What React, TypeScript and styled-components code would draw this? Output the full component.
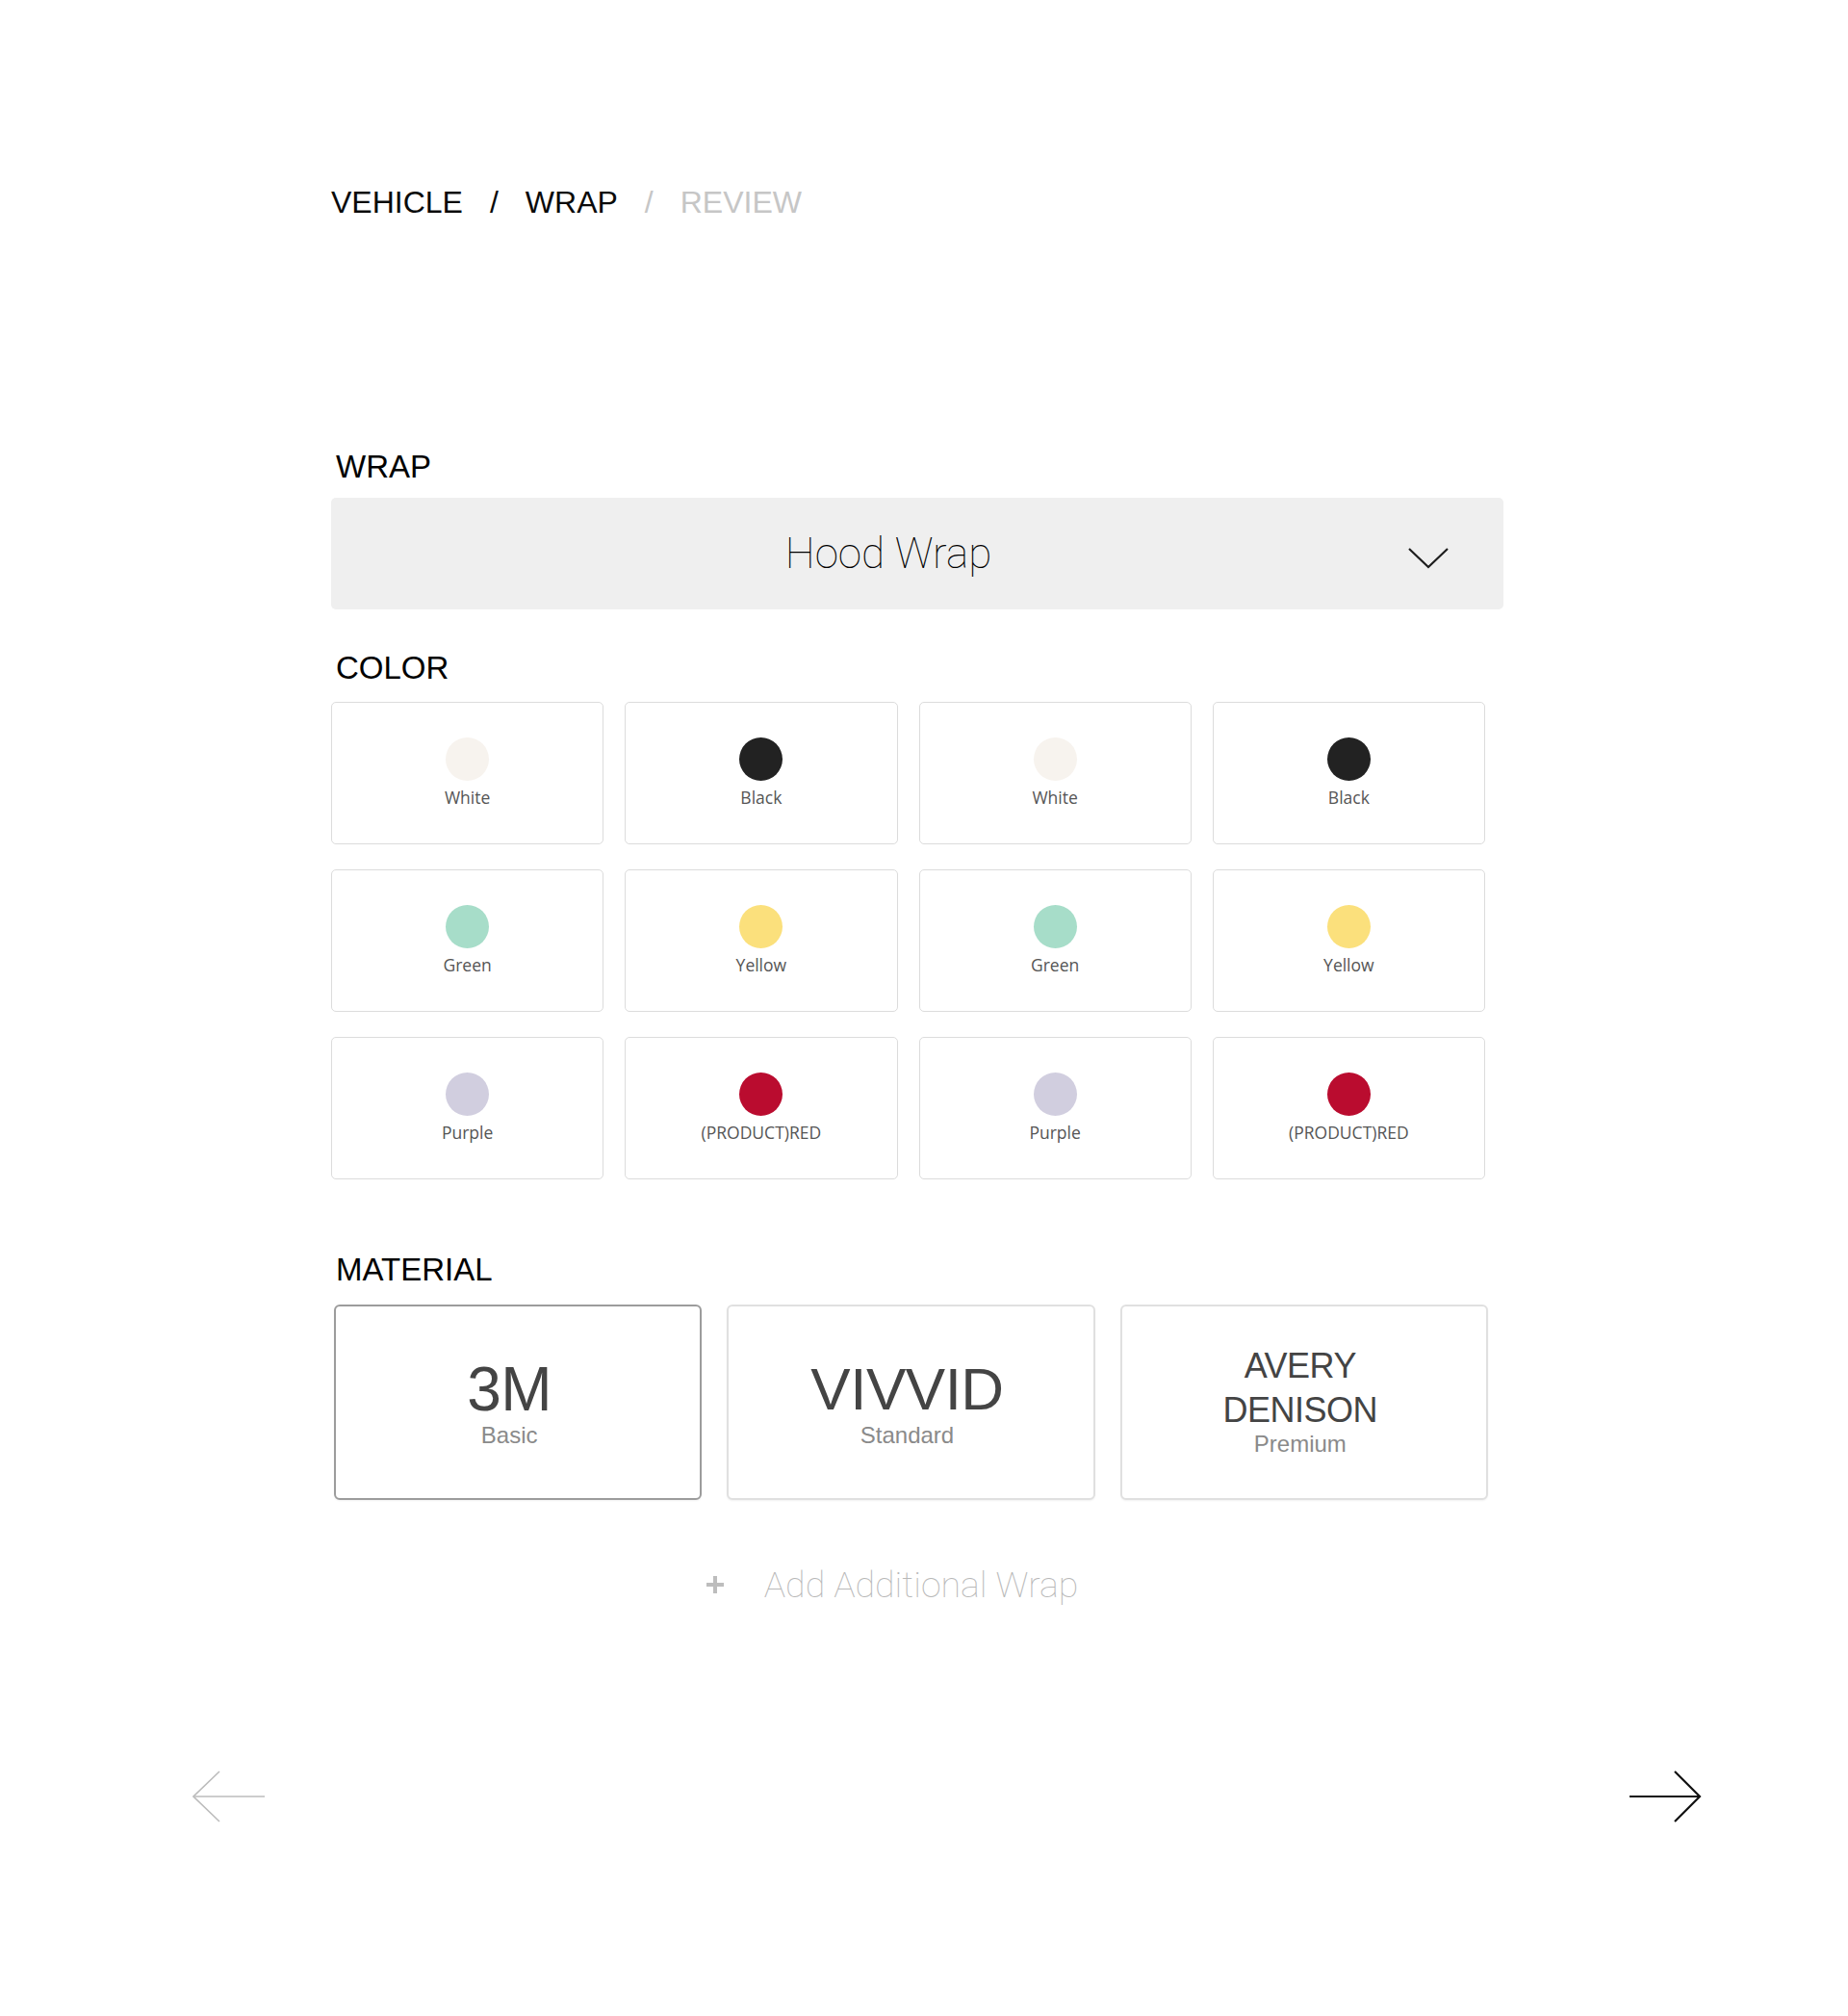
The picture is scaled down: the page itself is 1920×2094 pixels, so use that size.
import React from "react";
import styled, { createGlobalStyle } from "styled-components";

const GlobalStyle = createGlobalStyle`
  html, body {
    margin: 0;
    padding: 0;
    background: #fff;
  }
  body {
    font-family: "Liberation Sans", Arial, sans-serif;
    color: #111;
  }
  * { box-sizing: border-box; }
`;

const Page = styled.div`
  width: 1920px;
  min-height: 2094px;
  padding-top: 194px;
`;

const Content = styled.div`
  margin-left: 344px;
  width: 1218px;
  display: flex;
  flex-direction: column;
`;

const Breadcrumb = styled.nav`
  display: flex;
  align-items: center;
  font-size: 32px;
  line-height: 32px;
`;

const Crumb = styled.span<{ $muted?: boolean }>`
  color: ${(p) => (p.$muted ? "#c6c6c6" : "#0a0a0a")};
`;

const Slash = styled.span<{ $muted?: boolean }>`
  margin: 0 28px;
  color: ${(p) => (p.$muted ? "#c6c6c6" : "#0a0a0a")};
`;

const SectionLabel = styled.h2<{ $gap: number }>`
  margin: ${(p) => p.$gap}px 0 0;
  padding-left: 5px;
  font-size: 33px;
  line-height: 32px;
  font-weight: 400;
  color: #000;
`;

const Select = styled.div`
  position: relative;
  margin-top: 16px;
  height: 116px;
  background: #efefef;
  border-radius: 5px;
  display: flex;
  align-items: center;
  justify-content: center;
  padding-right: 60px;
`;

const SelectValue = styled.span`
  font-family: Roboto, "Liberation Sans", sans-serif;
  font-weight: 100;
  font-size: 44px;
  line-height: 48px;
  color: #000;
`;

const Chevron = styled.svg`
  position: absolute;
  right: 56px;
  top: 51px;
`;

const ColorGrid = styled.div`
  margin-top: 19px;
  width: 1199px;
  display: grid;
  grid-template-columns: repeat(4, 1fr);
  grid-auto-rows: 148px;
  column-gap: 22px;
  row-gap: 26px;
`;

const ColorCell = styled.button`
  border: 1.5px solid #dcdcdc;
  border-radius: 5px;
  background: #fff;
  display: flex;
  flex-direction: column;
  align-items: center;
  justify-content: center;
  gap: 7px;
  padding: 0 0 2px;
  cursor: pointer;
`;

const Swatch = styled.span<{ $color: string }>`
  width: 45px;
  height: 45px;
  border-radius: 50%;
  background: ${(p) => p.$color};
`;

const ColorName = styled.span`
  font-family: "Open Sans", "Liberation Sans", sans-serif;
  font-size: 17.5px;
  line-height: 20px;
  color: #555;
`;

const MaterialRow = styled.div`
  margin-top: 20px;
  margin-left: 3px;
  width: 1199px;
  display: grid;
  grid-template-columns: repeat(3, 1fr);
  column-gap: 26px;
`;

const MaterialCard = styled.button<{ $selected?: boolean; $lift: number }>`
  height: 203px;
  border: 2px solid ${(p) => (p.$selected ? "#9c9c9c" : "#e0e0e0")};
  border-radius: 6px;
  background: #fff;
  box-shadow: 0 1px 2px rgba(0, 0, 0, 0.06);
  display: flex;
  flex-direction: column;
  align-items: center;
  justify-content: center;
  padding: 0 ${(p) => (p.$selected ? 18 : 8)}px ${(p) => p.$lift}px 0;
  font-family: "Liberation Sans", Arial, sans-serif;
  cursor: pointer;
`;

const Brand = styled.span<{ $size: number; $line: number }>`
  font-size: ${(p) => p.$size}px;
  line-height: ${(p) => p.$line}px;
  color: #444;
  letter-spacing: -0.5px;
  text-align: center;
`;

const Tier = styled.span<{ $gap: number }>`
  margin-top: ${(p) => p.$gap}px;
  font-size: 24px;
  line-height: 24px;
  color: #8a8a8a;
`;

const AddRow = styled.div`
  margin-top: 68px;
  display: flex;
  align-items: center;
  justify-content: center;
  gap: 42px;
  padding-right: 52px;
`;

const AddText = styled.span`
  font-family: Roboto, "Liberation Sans", sans-serif;
  font-weight: 100;
  font-size: 37.5px;
  line-height: 40px;
  color: #b8b8b8;
`;

const Nav = styled.div`
  margin-top: 172px;
  display: flex;
  justify-content: space-between;
  padding: 0 152px 0 200px;
`;

const colors = [
  { name: "White", hex: "#f7f3ee" },
  { name: "Black", hex: "#222222" },
  { name: "White", hex: "#f7f3ee" },
  { name: "Black", hex: "#222222" },
  { name: "Green", hex: "#a7ddc9" },
  { name: "Yellow", hex: "#fbe07c" },
  { name: "Green", hex: "#a7ddc9" },
  { name: "Yellow", hex: "#fbe07c" },
  { name: "Purple", hex: "#d1cedf" },
  { name: "(PRODUCT)RED", hex: "#ba0c2f" },
  { name: "Purple", hex: "#d1cedf" },
  { name: "(PRODUCT)RED", hex: "#ba0c2f" },
];

const materials = [
  { brand: ["3M"], tier: "Basic", size: 64, line: 64, gap: 4, lift: 0, selected: true },
  { brand: ["VIVVID"], tier: "Standard", size: 62, line: 64, gap: 4, lift: 0 },
  { brand: ["AVERY", "DENISON"], tier: "Premium", size: 36, line: 46, gap: 0, lift: 6 },
];

const App = () => {
  return (
    <Page>
      <GlobalStyle />
      <Content>
        <Breadcrumb>
          <Crumb>VEHICLE</Crumb>
          <Slash>/</Slash>
          <Crumb>WRAP</Crumb>
          <Slash $muted>/</Slash>
          <Crumb $muted>REVIEW</Crumb>
        </Breadcrumb>

        <SectionLabel $gap={243}>WRAP</SectionLabel>
        <Select>
          <SelectValue>Hood Wrap</SelectValue>
          <Chevron width="44" height="24" viewBox="0 0 44 24">
            <polyline points="2,2 22,21 42,2" fill="none" stroke="#1e1e1e" strokeWidth="2.2" />
          </Chevron>
        </Select>

        <SectionLabel $gap={45}>COLOR</SectionLabel>
        <ColorGrid>
          {colors.map((c, i) => (
            <ColorCell key={i}>
              <Swatch $color={c.hex} />
              <ColorName>{c.name}</ColorName>
            </ColorCell>
          ))}
        </ColorGrid>

        <SectionLabel $gap={78}>MATERIAL</SectionLabel>
        <MaterialRow>
          {materials.map((m) => (
            <MaterialCard key={m.tier} $selected={m.selected} $lift={m.lift}>
              {m.brand.map((b) => (
                <Brand key={b} $size={m.size} $line={m.line}>{b}</Brand>
              ))}
              <Tier $gap={m.gap}>{m.tier}</Tier>
            </MaterialCard>
          ))}
        </MaterialRow>

        <AddRow>
          <svg width="18" height="18" viewBox="0 0 18 18">
            <rect x="7" y="0" width="4" height="18" fill="#bdbdbd" />
            <rect x="0" y="7" width="18" height="4" fill="#bdbdbd" />
          </svg>
          <AddText>Add Additional Wrap</AddText>
        </AddRow>
      </Content>

      <Nav>
        <svg width="76" height="56" viewBox="0 0 76 56">
          <line x1="1" y1="28" x2="75" y2="28" stroke="#bcbcbc" strokeWidth="1.6" />
          <polyline points="28,2 1,28 28,54" fill="none" stroke="#bcbcbc" strokeWidth="1.6" />
        </svg>
        <svg width="76" height="56" viewBox="0 0 76 56">
          <line x1="1" y1="28" x2="74" y2="28" stroke="#111" strokeWidth="2.2" />
          <polyline points="48,2 74,28 48,54" fill="none" stroke="#111" strokeWidth="2.2" />
        </svg>
      </Nav>
    </Page>
  );
};

export default App;
